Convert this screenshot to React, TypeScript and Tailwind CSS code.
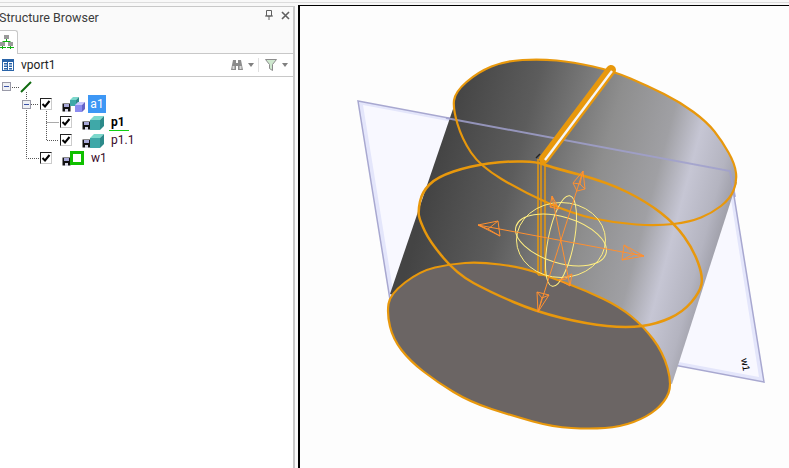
function Floppy() {
  return (
    <svg width="9" height="9" viewBox="0 0 9 9" className="shrink-0">
      <rect x="0.5" y="0.5" width="8" height="8" fill="#111" />
      <rect x="2" y="1" width="5" height="3" fill="#a8a8d8" />
      <rect x="3" y="6" width="3" height="3" fill="#d8d8e8" />
    </svg>
  );
}

function Check() {
  return (
    <span className="flex h-[12px] w-[12px] shrink-0 items-center justify-center border border-[#222] border-b-[#ccc] border-r-[#ccc] bg-white">
      <svg width="10" height="10" viewBox="0 0 10 10">
        <path d="M1.5 5 L4 7.5 L8.5 2" fill="none" stroke="#000" strokeWidth="2" />
      </svg>
    </span>
  );
}

function Minus() {
  return (
    <span className="flex h-[9px] w-[9px] shrink-0 items-center justify-center border border-[#9a9aa8] bg-[#eef0f4]">
      <span className="h-px w-[5px] bg-[#3a52a8]" />
    </span>
  );
}

function Cube() {
  return (
    <svg width="14" height="14" viewBox="0 0 14 14" className="shrink-0">
      <path d="M0 4 L4 0 H14 L10 4 Z" fill="#7cd8cc" />
      <path d="M10 4 L14 0 V10 L10 14 Z" fill="#2c8a8a" />
      <rect x="0" y="4" width="10" height="10" fill="#3fa8a8" />
    </svg>
  );
}

function Assembly() {
  return (
    <svg width="15" height="15" viewBox="0 0 15 15" className="shrink-0">
      <path d="M0 3 L3 0 H9 L6 3 Z" fill="#7cd8cc" />
      <path d="M6 3 L9 0 V6 L6 9 Z" fill="#2c8a8a" />
      <rect x="0" y="3" width="6" height="6" fill="#3fa8a8" />
      <path d="M5 8 L8 5 H15 L12 8 Z" fill="#c8c8ff" />
      <path d="M12 8 L15 5 V12 L12 15 Z" fill="#6464c8" />
      <rect x="5" y="8" width="7" height="7" fill="#8c8cf0" />
    </svg>
  );
}

function Vport() {
  return (
    <svg width="12" height="12" viewBox="0 0 12 12" className="shrink-0">
      <rect x="0.5" y="0.5" width="11" height="11" fill="#fff" stroke="#2a64a8" />
      <rect x="0" y="0" width="12" height="3" fill="#2a64a8" />
      <rect x="2" y="4" width="3" height="1.5" fill="#2a64a8" />
      <rect x="2" y="6.5" width="3" height="1.5" fill="#2a64a8" />
      <rect x="2" y="9" width="3" height="1.5" fill="#2a64a8" />
      <rect x="7" y="4" width="3" height="1.5" fill="#2a64a8" />
      <rect x="7" y="6.5" width="3" height="1.5" fill="#2a64a8" />
      <rect x="7" y="9" width="3" height="1.5" fill="#2a64a8" />
      <path d="M5.5 3 V12" stroke="#2a64a8" />
    </svg>
  );
}

function TreeIcon() {
  return (
    <svg width="15" height="15" viewBox="0 0 15 15" className="shrink-0">
      <rect x="4" y="0" width="5" height="4" fill="#9a9a9a" />
      <rect x="0" y="7" width="5" height="4" fill="#9a9a9a" />
      <rect x="8" y="7" width="5" height="4" fill="#9a9a9a" />
      <path d="M6.5 4 V6.5 M2.5 6.5 H10.5 M0 12.5 H6 M7 12.5 H14 M2.5 11 V14 M10.5 11 V14" stroke="#10b010" fill="none" />
    </svg>
  );
}

function Binoculars() {
  return (
    <svg width="12" height="11" viewBox="0 0 12 11" className="shrink-0">
      <path d="M2 0 H5 V3 H7 V0 H10 L12 10 H7 V6 H5 V10 H0 Z" fill="#8c8c8c" />
      <rect x="1.5" y="6" width="2" height="3" fill="#d8d8d8" />
      <rect x="8.5" y="6" width="2" height="3" fill="#d8d8d8" />
    </svg>
  );
}

function Funnel() {
  return (
    <svg width="12" height="12" viewBox="0 0 12 12" className="ml-[6px] shrink-0">
      <path d="M0.5 0.5 H11.5 L7.5 5.5 V11.5 L4.5 9.5 V5.5 Z" fill="#cfe8cf" stroke="#8c8c8c" />
    </svg>
  );
}

function Caret() {
  return <span className="ml-[5px] h-0 w-0 shrink-0 border-x-[3px] border-t-[4px] border-x-transparent border-t-[#808080]" />;
}

const topRim = [
  [573, 63], [540, 60], [505, 62], [478, 73], [455, 93], [453, 110], [462, 140], [480, 167], [523, 193], [573, 215],
  [615, 224], [657, 227], [690, 223], [712, 214], [730, 200], [737, 183], [735, 165], [722, 142], [707, 123], [680, 103],
  [648, 87], [613, 72],
];
const midRim = [
  [507, 162], [470, 167], [437, 178], [422, 193], [418, 212], [420, 222], [430, 243], [457, 275], [490, 293], [537, 313],
  [587, 325], [627, 329], [657, 325], [683, 313], [700, 293], [703, 277], [693, 250], [675, 225], [647, 203], [607, 183],
  [547, 167], [538, 163],
];
const bottomRim = [
  [387, 315], [390, 295], [420, 272], [450, 265], [480, 263], [520, 268], [550, 278], [587, 292], [620, 308], [643, 327],
  [663, 353], [672, 385], [665, 403], [647, 418], [620, 428], [590, 430], [553, 428], [513, 417], [470, 403], [437, 383],
  [410, 362], [393, 340],
];

// closed curve through the midpoints, so the rims don't look so faceted
function smooth(pts: number[][]) {
  const mid = (a: number[], b: number[]) => `${(a[0] + b[0]) / 2} ${(a[1] + b[1]) / 2}`;
  let d = `M${mid(pts[pts.length - 1], pts[0])}`;
  pts.forEach((p, i) => {
    d += ` Q${p[0]} ${p[1]} ${mid(p, pts[(i + 1) % pts.length])}`;
  });
  return d + " Z";
}

function Scene() {
  return (
    <svg viewBox="300 8 489 460" className="h-full w-full">
      <defs>
        <linearGradient id="body" gradientUnits="userSpaceOnUse" x1="420" y1="220" x2="720" y2="300">
          <stop offset="0" stopColor="#444444" />
          <stop offset="0.25" stopColor="#5c5c5c" />
          <stop offset="0.52" stopColor="#8e8e8e" />
          <stop offset="0.7" stopColor="#a0a0a4" />
          <stop offset="0.8" stopColor="#c6c6d4" />
          <stop offset="0.9" stopColor="#b4b4c0" />
          <stop offset="1" stopColor="#8c8c94" />
        </linearGradient>
      </defs>

      {/* datum plane */}
      <polygon points="358,102 730,172 764,383 392,313" fill="#e4e6fb" stroke="#a8a8d0" strokeWidth="1.5" />
      <polygon points="363,106 727,175 759,378 396,310" fill="#f8f8ff" />
      <text x="0" y="0" transform="translate(741,360) rotate(80)" fontFamily="Liberation Sans, sans-serif" fontSize="10" fill="#000">w1</text>

      {/* cylinder */}
      <path d={smooth(topRim)} fill="url(#body)" />
      <polygon points="453,110 390,295 672,385 737,183" fill="url(#body)" />
      <path d={smooth(bottomRim)} fill="#6b6564" stroke="#e8980c" strokeWidth="2.2" />

      {/* plane edge seen through the solid */}
      <polyline points="446,119 730,172 735,198" fill="none" stroke="#a0a0cc" strokeWidth="2" opacity="0.85" />

      <path d={smooth(topRim)} fill="none" stroke="#e8980c" strokeWidth="2.2" />
      <path d={smooth(midRim)} fill="none" stroke="#e8980c" strokeWidth="2.5" />

      {/* rib */}
      <path d="M544 160 L611 71" stroke="#e8980c" strokeWidth="10" strokeLinecap="round" />
      <path d="M545 161 L612 72" stroke="#f6f6f6" strokeWidth="2.4" />
      <path d="M538 160 V276 M541 160 V276 M545 163 V276" stroke="#e8980c" strokeWidth="1.5" fill="none" />
      <path d="M538 276 H544 L546 272" stroke="#e8980c" strokeWidth="1.5" fill="none" />
      <path d="M536 159 L540 155" stroke="#222" strokeWidth="1.5" />

      {/* manipulator sphere */}
      <g fill="none" stroke="#ffee80" strokeWidth="1">
        <ellipse cx="561" cy="241" rx="44.5" ry="37.5" />
        <ellipse cx="561" cy="241" rx="47" ry="23" transform="rotate(17 561 241)" />
        <ellipse cx="561" cy="242" rx="13" ry="46" transform="rotate(11 561 242)" />
      </g>

      {/* manipulator arrows */}
      <g fill="none" stroke="#ff9030" strokeWidth="1">
        <path d="M478 226 L644 257" />
        <path d="M583 172 L538 313" />
        <path d="M552 197 L570 287" />
        <path d="M478 226 L498 222 L500 237 Z M498 222 L488 230 L500 237 M488 230 L478 226" />
        <path d="M644 257 L624 246 L622 261 Z M624 246 L634 255 L622 261 M634 255 L644 257" />
        <path d="M583 172 L573 184 L577 192 L585 190 Z M573 184 L580 185 L585 190 M580 185 L583 172" />
        <path d="M538 313 L537 293 L549 296 Z M537 293 L542 299 L549 296 M542 299 L538 313" />
        <path d="M552 197 L550 208 L559 210 Z M550 208 L555 205 L559 210" />
        <path d="M570 287 L559 281 L572 275 Z M559 281 L566 280 L572 275" />
      </g>
    </svg>
  );
}

export default function App() {
  return (
    <div className="flex h-[468px] w-[789px] flex-col overflow-hidden bg-[#f8f8f8] font-['Roboto',sans-serif] text-[#1a1a1a]">
      <div className="h-[2px] shrink-0 bg-[#f8f8f8]" />
      <div className="h-px shrink-0 bg-[#dcdcdc]" />
      <div className="flex min-h-0 flex-1 pt-[3px]">
        <aside className="flex h-full w-[295px] shrink-0 flex-col border-r-2 border-t border-[#c8c8c8] bg-white">
          <header className="flex h-[23px] shrink-0 items-start justify-between bg-[#fafafa] pr-[3px]">
            <span className="-ml-[1px] mt-[3px] text-[12.5px] leading-[15px] text-[#3c3c3c]">Structure Browser</span>
            <div className="mt-[3px] flex items-center gap-[8px]">
              <svg width="8" height="10" viewBox="0 0 8 10">
                <path d="M1.5 0.5 H6.5 V6 H1.5 Z M0 6 H8 M4 6 V10" fill="none" stroke="#606060" />
              </svg>
              <svg width="9" height="9" viewBox="0 0 9 9">
                <path d="M1 1 L8 8 M8 1 L1 8" stroke="#606060" strokeWidth="1.6" />
              </svg>
            </div>
          </header>
          <div className="flex h-[24px] shrink-0 items-end border-b border-[#c8c8c8] bg-[#fafafa]">
            <div className="-mb-px flex h-[24px] w-[18px] items-center rounded-tr-[3px] border-r border-t border-[#c8c8c8] bg-white">
              <TreeIcon />
            </div>
          </div>
          <div className="flex h-[23px] shrink-0 items-center border-b border-[#c8c8c8] bg-white pl-[2px] pr-[5px]">
            <Vport />
            <span className="ml-[7px] text-[12px] leading-none text-[#222]">vport1</span>
            <div className="ml-auto flex items-center">
              <Binoculars />
              <Caret />
              <span className="ml-[4px] h-[14px] w-px bg-[#e0e0e0]" />
              <Funnel />
              <Caret />
            </div>
          </div>
          <div className="relative flex-1 pt-[1px] text-[12px] leading-none">
            <svg className="absolute left-0 top-0" width="80" height="100" viewBox="0 77 80 100">
              <path d="M12 87.5 H19 M26.5 92 V158.5 H39 M31 104.5 H39 M46.5 111 V140.5 H59 M46.5 122.5 H59" stroke="#555" strokeDasharray="1 1" fill="none" />
            </svg>
            <div className="relative flex h-[17px] items-center pl-[2px]">
              <Minus />
              <svg width="12" height="12" viewBox="0 0 12 12" className="ml-[9px]">
                <path d="M1 11 L11 1" stroke="#0f6a0f" strokeWidth="2" />
              </svg>
            </div>
            <div className="relative flex h-[18px] items-center pl-[22px]">
              <Minus />
              <span className="ml-[9px]"><Check /></span>
              <span className="ml-[10px] mt-[6px]"><Floppy /></span>
              <span className="-ml-px"><Assembly /></span>
              <span className="ml-[3px] flex h-[18px] w-[18px] items-center justify-center bg-[#3d97f5] text-white">a1</span>
            </div>
            <div className="relative flex h-[18px] items-center pl-[60px]">
              <Check />
              <span className="ml-[10px] mt-[6px]"><Floppy /></span>
              <span className="-ml-px mt-[1px]"><Cube /></span>
              <span className="relative ml-[7px] font-bold text-black">
                p1
                <span className="absolute -bottom-[3px] -left-[2px] h-px w-[20px] bg-[#10d010]" />
              </span>
            </div>
            <div className="relative flex h-[18px] items-center pl-[60px]">
              <Check />
              <span className="ml-[10px] mt-[6px]"><Floppy /></span>
              <span className="-ml-px mt-[1px]"><Cube /></span>
              <span className="ml-[7px] text-[#3a0a2a]">p1.1</span>
            </div>
            <div className="relative flex h-[18px] items-center pl-[40px]">
              <Check />
              <span className="ml-[10px] mt-[6px]"><Floppy /></span>
              <span className="-ml-px h-[14px] w-[14px] border-[3px] border-[#10c000] bg-white" />
              <span className="ml-[7px] text-[#3a0a2a]">w1</span>
            </div>
          </div>
        </aside>
        <div className="w-[3px] shrink-0 bg-[#fafafa]" />
        <main className="-mt-px min-w-0 flex-1 border-l-2 border-t border-black bg-[#fdfdfd]">
          <Scene />
        </main>
      </div>
    </div>
  );
}
